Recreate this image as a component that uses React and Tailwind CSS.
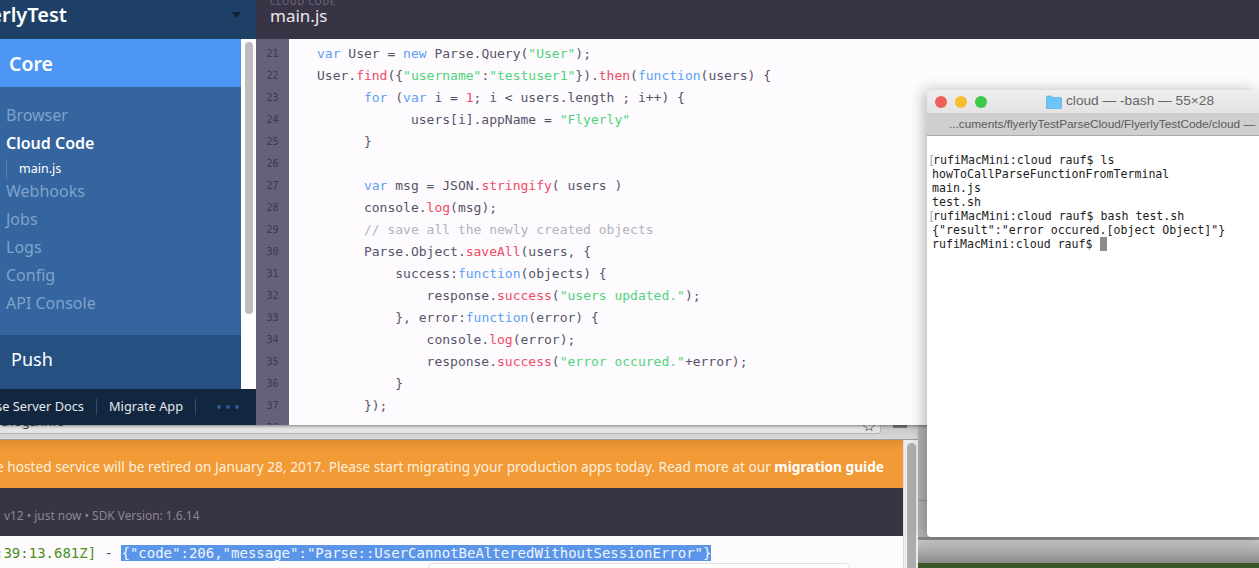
const SANS = "font-['Noto_Sans',sans-serif]"

// token kinds: p plain, k keyword, f function call, s string, c comment
const CODE = [
  [0, [['k', 'var'], ['p', ' User = '], ['k', 'new'], ['p', ' Parse.Query('], ['s', '"User"'], ['p', ');']]],
  [0, [['p', 'User.'], ['f', 'find'], ['p', '({'], ['s', '"username"'], ['p', ':'], ['s', '"testuser1"'], ['p', '}).'], ['f', 'then'], ['p', '('], ['k', 'function'], ['p', '(users) {']]],
  [6, [['k', 'for'], ['p', ' ('], ['k', 'var'], ['p', ' i = '], ['f', '1'], ['p', '; i < users.length ; i++) {']]],
  [12, [['p', 'users[i].appName = '], ['s', '"Flyerly"']]],
  [6, [['p', '}']]],
  [0, []],
  [6, [['k', 'var'], ['p', ' msg = JSON.'], ['f', 'stringify'], ['p', '( users )']]],
  [6, [['p', 'console.'], ['f', 'log'], ['p', '(msg);']]],
  [6, [['c', '// save all the newly created objects']]],
  [6, [['p', 'Parse.Object.'], ['f', 'saveAll'], ['p', '(users, {']]],
  [10, [['p', 'success:'], ['k', 'function'], ['p', '(objects) {']]],
  [14, [['p', 'response.'], ['f', 'success'], ['p', '('], ['s', '"users updated."'], ['p', ');']]],
  [10, [['p', '}, error:'], ['k', 'function'], ['p', '(error) {']]],
  [14, [['p', 'console.'], ['f', 'log'], ['p', '(error);']]],
  [14, [['p', 'response.'], ['f', 'success'], ['p', '('], ['s', '"error occured."'], ['p', '+error);']]],
  [10, [['p', '}']]],
  [6, [['p', '});']]],
]

const TOKEN = {
  p: 'text-[#57536a]',
  k: 'text-[#5b9ff5]',
  f: 'text-[#ef4a66]',
  s: 'text-[#4fd37c]',
  c: 'text-[#b4b1c0]',
}

const NAV_REST = ['Webhooks', 'Jobs', 'Logs', 'Config', 'API Console']

function Sidebar() {
  return (
    <div className={`flex flex-col w-[256px] shrink-0 h-full ${SANS}`}>
      <div className="flex items-start h-[39px] bg-[#1e3f66] shrink-0">
        <div className="flex justify-end w-[67px] overflow-hidden whitespace-nowrap text-[20px] font-semibold text-white leading-[30px]">
          FlyerlyTest
        </div>
        <svg width="9" height="6" viewBox="0 0 9 6" className="ml-[165px] mt-[12px]">
          <path d="M0 0h9L4.5 6z" fill="#0f2238" />
        </svg>
      </div>

      <div className="flex flex-1 min-h-0">
        <div className="flex flex-col w-[241px]">
          <div className="flex items-center h-[48px] pl-[9px] pt-[1px] bg-[#4e96f3] text-[19.5px] font-semibold text-white">Core</div>
          <div className="flex flex-col flex-1 pt-[14px] pl-[6px] bg-[#34659f] text-[16px] leading-[28px]">
            <div className="text-[#7ea3cc]">Browser</div>
            <div className="font-semibold text-white">Cloud Code</div>
            <div className="flex items-center h-[20px] mt-[2px] mb-[-2px] pl-[12px] border-l border-[#5680b0] text-[12.5px] text-white">main.js</div>
            {NAV_REST.map(label => (
              <div key={label} className="text-[#7ea3cc]">{label}</div>
            ))}
          </div>
          <div className="flex items-center h-[54px] pl-[11px] pb-[6px] bg-[#264f82] text-[18px] text-white">Push</div>
        </div>
        <div className="w-[15px] bg-white pt-[3px] pl-[4px]">
          <div className="w-[8px] h-[272px] rounded-full bg-[#bdbdbd]" />
        </div>
      </div>

      <div className="flex items-center h-[36px] bg-[#12263f] text-[12.8px] text-[#e4e8ee] whitespace-nowrap shrink-0">
        <div className="flex justify-end w-[84px] overflow-hidden">Parse Server Docs</div>
        <div className="w-px h-[16px] ml-[12px] bg-[#3a4c64]" />
        <div className="ml-[12px] w-[74px]">Migrate App</div>
        <div className="w-px h-[16px] ml-[12px] bg-[#3a4c64]" />
        <div className="flex gap-[5px] ml-[21px]">
          <span className="w-[4px] h-[4px] rounded-full bg-[#2a5a95]" />
          <span className="w-[4px] h-[4px] rounded-full bg-[#2a5a95]" />
          <span className="w-[4px] h-[4px] rounded-full bg-[#2a5a95]" />
        </div>
      </div>
    </div>
  )
}

function Editor() {
  return (
    <div className="flex flex-col flex-1 min-w-0 h-full">
      <div className={`h-[39px] shrink-0 pl-[14px] bg-[#383345] overflow-hidden ${SANS}`}>
        <div className="h-[5px] mt-[-3px] text-[9px] leading-[9px] tracking-[0.9px] text-[#6f6b7e]">CLOUD CODE</div>
        <div className="mt-[1px] text-[17px] leading-[26px] text-[#e9e8ec]">main.js</div>
      </div>
      <div className="flex flex-1 min-h-0 overflow-hidden bg-[#fdfbfd] font-['DejaVu_Sans_Mono',monospace] text-[13px] leading-[22px]">
        <div className="w-[33px] shrink-0 pt-[4px] bg-[#66607a] text-center text-[10px] text-[#3c3850]">
          {[...CODE.keys(), 17].map(i => (
            <div key={i} className="h-[22px]">{i + 21}</div>
          ))}
        </div>
        <div className="pt-[4px] pl-[28px] whitespace-pre">
          {CODE.map(([indent, tokens], i) => (
            <div key={i} className="h-[22px]">
              {' '.repeat(indent)}
              {tokens.map(([kind, text], j) => (
                <span key={j} className={TOKEN[kind]}>{text}</span>
              ))}
            </div>
          ))}
        </div>
      </div>
    </div>
  )
}

function LogWindow() {
  return (
    <div className="absolute left-0 top-[425px] w-[918px] h-[143px] flex flex-col">
      <div className="relative h-[15px] shrink-0 bg-gradient-to-b from-[#c6c6c6] to-[#d9d9d9] border-b border-[#9b9b9b]">
        <div className="h-[9px] w-[881px] bg-[#e4e4e4] border-r border-b border-[#b5b5b5] rounded-br-[3px] overflow-hidden">
          <div className={`pl-[1px] mt-[-11px] text-[13px] leading-[14px] text-[#444] ${SANS}`}>t/logs/info</div>
        </div>
        <svg width="14" height="6" viewBox="0 0 14 6" className="absolute left-[862px] top-0">
          <path d="M1 0l4 3.2-1.2 2.3L7 4l3.2 1.5L9 3.2 13 0" fill="none" stroke="#777" />
        </svg>
        <div className="absolute left-[893px] top-0 w-[14px] h-[3px] bg-[#777]" />
      </div>
      <div className="flex flex-1 min-h-0">
        <div className="flex flex-col w-[903px] shrink-0">
          <div className={`flex items-center justify-end h-[48px] pr-[19px] pt-[6px] bg-gradient-to-b from-[#de8e30] to-[#f19a36] to-[22%] text-[13.7px] text-[#fdf0de] whitespace-nowrap overflow-hidden ${SANS}`}>
            <span>The hosted service will be retired on January 28, 2017. Please start migrating your production apps today. Read more at our <b className="font-bold text-white">migration guide</b></span>
          </div>
          <div className={`flex items-center h-[48px] pl-[4px] pt-[7px] bg-[#383345] text-[11.9px] text-[#8a8796] ${SANS}`}>
            v12 • just now • SDK Version: 1.6.14
          </div>
          <div className="relative flex-1 overflow-hidden bg-[#fdfbfd] pt-[9px] font-['DejaVu_Sans_Mono',monospace] text-[14px] leading-[17px] whitespace-pre">
            <div className="ml-[-5px]">
              <span className="text-[#4a8f1a]">:39:13.681Z]</span>
              <span className="text-[#57536a]"> - </span>
              <span className="bg-[#5a95ea] text-[#eef4fd]">{'{"code":206,"message":"Parse::UserCannotBeAlteredWithoutSessionError"}'}</span>
            </div>
            <div className="absolute left-[428px] top-[27px] w-[422px] h-[20px] bg-white border border-[#e0dee3] rounded-t-[4px]" />
          </div>
        </div>
        <div className="w-[15px] bg-[#ececec] pt-[3px] pl-[3px] border-l border-[#dcdcdc]">
          <div className="w-[9px] h-[140px] rounded-full bg-[#adadad]" />
        </div>
      </div>
    </div>
  )
}

function Terminal() {
  const prompt = 'rufiMacMini:cloud rauf$ '
  return (
    <div className="absolute left-[927px] top-[90px] w-[332px] h-[447px] flex flex-col rounded-tl-[5px] rounded-bl-[4px] overflow-hidden bg-white shadow-[-4px_0_14px_rgba(0,0,0,0.25)]">
      <div className="flex items-center h-[23px] shrink-0 bg-gradient-to-b from-[#efefef] to-[#e3e3e3] font-['Liberation_Sans',sans-serif] text-[13.7px] text-[#666]">
        <span className="ml-[8px] w-[12px] h-[12px] rounded-full bg-[#ee5f5a]" />
        <span className="ml-[8px] w-[12px] h-[12px] rounded-full bg-[#f5bd2f]" />
        <span className="ml-[8px] w-[12px] h-[12px] rounded-full bg-[#3ec949]" />
        <svg width="16" height="14" viewBox="0 0 16 14" className="ml-[59px]">
          <path d="M0.5 2a1 1 0 0 1 1-1h4l1.5 1.5h7.5a1 1 0 0 1 1 1V13a.5.5 0 0 1-.5.5H1a.5.5 0 0 1-.5-.5z" fill="#6cc4f8" stroke="#4ba6dc" strokeWidth="0.6" />
        </svg>
        <span className="ml-[4px] whitespace-nowrap">cloud — -bash — 55×28</span>
      </div>
      <div className="flex items-center h-[23px] pt-[1px] shrink-0 pl-[22px] bg-[#cfcfcf] border-b border-[#a9a9a9] font-['Liberation_Sans',sans-serif] text-[11.8px] text-[#5a5a5a] whitespace-nowrap overflow-hidden">
        ...cuments/flyerlyTestParseCloud/FlyerlyTestCode/cloud —
      </div>
      <div className="pt-[17px] pl-[5px] font-['DejaVu_Sans_Mono',monospace] text-[11.6px] leading-[14px] text-[#1c1c1c] whitespace-pre">
        <div><span className="inline-block w-[1px] -ml-[4px] mr-[4px] text-[#aaa]">[</span>{prompt}ls</div>
        <div>howToCallParseFunctionFromTerminal</div>
        <div>main.js</div>
        <div>test.sh</div>
        <div><span className="inline-block w-[1px] -ml-[4px] mr-[4px] text-[#aaa]">[</span>{prompt}bash test.sh</div>
        <div>{'{"result":"error occured.[object Object]"}'}</div>
        <div className="flex items-center">{prompt}<span className="w-[7px] h-[14px] bg-[#8c8c8c]" /></div>
      </div>
    </div>
  )
}

export default function App() {
  return (
    <div className="relative w-[1259px] h-[568px] overflow-hidden bg-[#b4b4b4]">
      {/* desktop peeking out below the terminal */}
      <div className="absolute left-[918px] top-[500px] w-[341px] h-px bg-[#8f8f8f]" />
      <div className="absolute left-[918px] top-[537px] w-[341px] h-[26px] bg-gradient-to-b from-[#c9c9c9] to-[#8a8a8a] border-t-[3px] border-[#8a8a8a]" />
      <div className="absolute left-[918px] top-[563px] w-[341px] h-[5px] bg-[#3a5528]" />

      <LogWindow />

      {/* parse dashboard window */}
      <div className="absolute left-0 top-0 flex w-[1259px] h-[425px] shadow-[0_1px_3px_rgba(0,0,0,0.45)]">
        <Sidebar />
        <Editor />
      </div>

      <Terminal />
    </div>
  )
}
